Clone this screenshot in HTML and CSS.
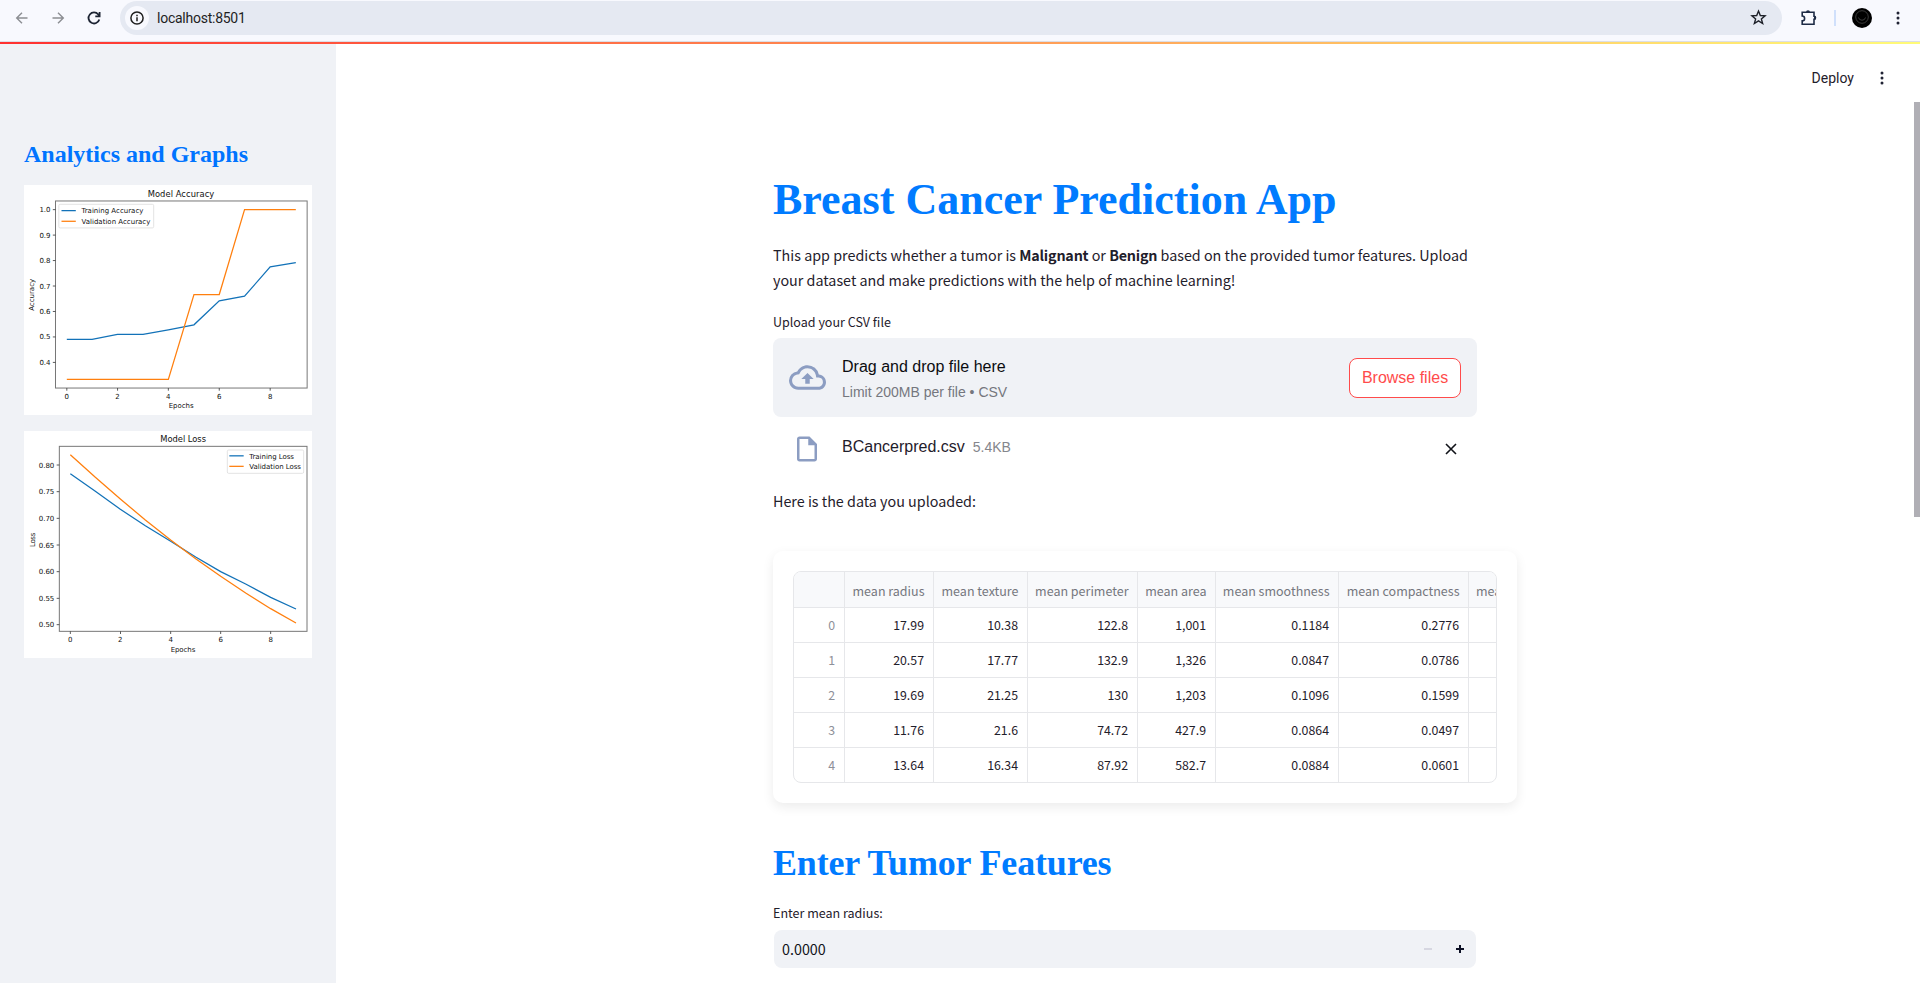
FILE: index.html
```html
<!DOCTYPE html>
<html lang="en">
<head>
<meta charset="utf-8">
<title>Breast Cancer Prediction App</title>
<link rel="stylesheet" href="styles.css">
</head>
<body>
<div class="toolbar">
  <svg class="nav-icon back" viewBox="0 0 16 16"><path d="M13.5 8H3M8 2.7L2.7 8L8 13.3"/></svg>
  <svg class="nav-icon forward" viewBox="0 0 16 16"><path d="M2.500 8H13M8 2.700L13.300 8L8 13.300"/></svg>
  <svg class="nav-icon reload" viewBox="0 0 16 16"><path d="M13.300 9.500A5.500 5.500 0 1 1 12.300 4.500L13.500 6M13.600 2V6.300H9.300"/></svg>
  <div class="omnibox">
    <span class="site-info"><svg viewBox="0 0 16 16"><circle cx="8" cy="8" r="6.100"/><path d="M8 7.300V11.300M8 4.700V6.200"/></svg></span>
    <span class="url">localhost:8501</span>
    <svg class="star" viewBox="0 0 16 16"><path d="M8 1.900L9.700 6.100L14.200 6.400L10.700 9.300L11.900 13.700L8 11.200L4.100 13.700L5.300 9.300L1.800 6.400L6.300 6.100Z"/></svg>
  </div>
  <svg class="puzzle" viewBox="0 0 18 18"><path d="M2.200 3.200H14V7.300A1.500 1.500 0 0 1 14 10.300V15.300H2.200V11.800A2.400 2.400 0 0 0 2.200 7Z"/><path class="solid" d="M6 3.200a2 2 0 0 1 4 0zM14 7a2 2 0 0 1 0 4z"/></svg>
  <span class="separator"></span>
  <svg class="avatar" viewBox="0 0 20 20"><circle cx="10" cy="10" r="10"/><circle class="ring" cx="10" cy="9" r="6.300"/><path class="ring" d="M6.500 9.500A3.600 3.600 0 0 0 13.500 9.500"/></svg>
  <svg class="dots" viewBox="0 0 4 14"><circle cx="2" cy="2" r="1.500"/><circle cx="2" cy="7" r="1.500"/><circle cx="2" cy="12" r="1.500"/></svg>
</div>
<div class="decoration"></div>
<div class="app">
  <aside class="sidebar">
    <h3>Analytics and Graphs</h3>
    <svg class="chart accuracy" viewBox="72 44 864 691">
      <rect class="frame" x="166" y="92" width="756" height="562"/>
      <path class="tick" d="M158 118H166M158 194.500H166M158 271H166M158 347.500H166M158 424H166M158 500.500H166M158 577H166M200 654V662M352.500 654V662M505 654V662M658 654V662M811 654V662"/>
      <polyline class="train" points="200,508 276,508 352,493 429,493 505,479 582,464 658,392 734,378 811,290 888,277"/>
      <polyline class="valid" points="200,628 505,628 582,373 658,373 734,118 888,118"/>
      <rect class="legend" x="176" y="102" width="285" height="71" rx="4"/>
      <path class="train" d="M184 121H227"/><path class="valid" d="M184 153H227"/>
      <text x="443" y="79" font-size="25" textLength="200">Model Accuracy</text>
      <text x="244" y="129" textLength="186">Training Accuracy</text>
      <text x="244" y="161" textLength="207">Validation Accuracy</text>
      <g class="y-labels"><text x="151" y="126">1.0</text><text x="151" y="202">0.9</text><text x="151" y="279">0.8</text><text x="151" y="355">0.7</text><text x="151" y="432">0.6</text><text x="151" y="508">0.5</text><text x="151" y="585">0.4</text></g>
      <g class="x-labels"><text x="200" y="686">0</text><text x="352" y="686">2</text><text x="505" y="686">4</text><text x="658" y="686">6</text><text x="811" y="686">8</text></g>
      <text x="506" y="715" textLength="75">Epochs</text>
      <text transform="translate(102 422) rotate(-90)" textLength="96">Accuracy</text>
    </svg>
    <svg class="chart loss" viewBox="72 33 864 681">
      <rect class="frame" x="178" y="79" width="743" height="555"/>
      <path class="tick" d="M170 135H178M170 215H178M170 295H178M170 375H178M170 455H178M170 535H178M170 614H178M211 634V642M361.500 634V642M512 634V642M662 634V642M812 634V642"/>
      <polyline class="train" points="211,161 286,214 361,268 436,317 512,364 587,411 662,455 737,492 812,532 888,567"/>
      <polyline class="valid" points="211,104 286,172 361,237 436,300 512,360 587,416 662,469 737,519 812,566 888,609"/>
      <rect class="legend" x="682" y="90" width="229" height="70" rx="4"/>
      <path class="train" d="M688 107.500H731"/><path class="valid" d="M688 139H731"/>
      <text x="481" y="67" font-size="25" textLength="137">Model Loss</text>
      <text x="748" y="116" textLength="134">Training Loss</text>
      <text x="748" y="147" textLength="155">Validation Loss</text>
      <g class="y-labels"><text x="163" y="143">0.80</text><text x="163" y="223">0.75</text><text x="163" y="303">0.70</text><text x="163" y="383">0.65</text><text x="163" y="463">0.60</text><text x="163" y="543">0.55</text><text x="163" y="622">0.50</text></g>
      <g class="x-labels"><text x="211" y="665">0</text><text x="361" y="665">2</text><text x="512" y="665">4</text><text x="662" y="665">6</text><text x="812" y="665">8</text></g>
      <text x="512" y="695" textLength="74">Epochs</text>
      <text transform="translate(105 381) rotate(-90)" textLength="43">Loss</text>
    </svg>
  </aside>
  <main class="main">
    <header class="header">
      <span class="deploy">Deploy</span>
      <svg class="dots" viewBox="0 0 4 14"><circle cx="2" cy="2" r="1.500"/><circle cx="2" cy="7" r="1.500"/><circle cx="2" cy="12" r="1.500"/></svg>
    </header>
    <div class="content">
      <h1>Breast Cancer Prediction App</h1>
      <p class="intro">This app predicts whether a tumor is <strong>Malignant</strong> or <strong>Benign</strong> based on the provided tumor features. Upload<br>your dataset and make predictions with the help of machine learning!</p>
      <div class="label upload-label">Upload your CSV file</div>
      <div class="dropzone">
        <svg class="cloud" viewBox="0 0 24 24"><path d="M19.350 10.040A7.490 7.490 0 0 0 12 4C9.110 4 6.600 5.640 5.350 8.040A5.994 5.994 0 0 0 0 14c0 3.310 2.690 6 6 6h13c2.760 0 5-2.240 5-5 0-2.640-2.050-4.780-4.650-4.960zM19 18H6c-2.210 0-4-1.790-4-4 0-2.050 1.530-3.760 3.560-3.970l1.070-.110.500-.950A5.469 5.469 0 0 1 12 6c2.620 0 4.880 1.860 5.390 4.430l.300 1.500 1.530.110A2.980 2.980 0 0 1 22 15c0 1.650-1.350 3-3 3zM8 13h2.550v3h2.900v-3H16l-4-4z"/></svg>
        <div class="drop-text"><span>Drag and drop file here</span><small>Limit 200MB per file • CSV</small></div>
        <button class="browse">Browse files</button>
      </div>
      <div class="file">
        <svg class="file-icon" viewBox="0 0 24 24"><path d="M14 2H6c-1.100 0-2 .900-2 2v16c0 1.100.900 2 2 2h12c1.100 0 2-.900 2-2V8l-6-6zM6 20V4h7v5h5v11H6z"/></svg>
        <span class="file-name">BCancerpred.csv</span>
        <span class="file-size">5.4KB</span>
        <svg class="close" viewBox="0 0 12 12"><path d="M1 1L11 11M11 1L1 11"/></svg>
      </div>
      <p class="data-note">Here is the data you uploaded:</p>
      <div class="card">
        <div class="table">
          <div class="row head"><span></span><span>mean radius</span><span>mean texture</span><span>mean perimeter</span><span>mean area</span><span>mean smoothness</span><span>mean compactness</span><span>mean concavity</span></div>
          <div class="row"><span>0</span><span>17.99</span><span>10.38</span><span>122.8</span><span>1,001</span><span>0.1184</span><span>0.2776</span><span></span></div>
          <div class="row"><span>1</span><span>20.57</span><span>17.77</span><span>132.9</span><span>1,326</span><span>0.0847</span><span>0.0786</span><span></span></div>
          <div class="row"><span>2</span><span>19.69</span><span>21.25</span><span>130</span><span>1,203</span><span>0.1096</span><span>0.1599</span><span></span></div>
          <div class="row"><span>3</span><span>11.76</span><span>21.6</span><span>74.72</span><span>427.9</span><span>0.0864</span><span>0.0497</span><span></span></div>
          <div class="row"><span>4</span><span>13.64</span><span>16.34</span><span>87.92</span><span>582.7</span><span>0.0884</span><span>0.0601</span><span></span></div>
        </div>
      </div>
      <h2>Enter Tumor Features</h2>
      <div class="label radius-label">Enter mean radius:</div>
      <div class="number-input">
        <span class="value">0.0000</span>
        <svg class="step minus" viewBox="0 0 8 8"><path d="M0 4H8"/></svg>
        <svg class="step" viewBox="0 0 8 8"><path d="M0 4H8M4 0V8"/></svg>
      </div>
    </div>
    <div class="scrollbar"></div>
  </main>
</div>
</body>
</html>
```
FILE: styles.css
```css
* { box-sizing: border-box; }
body {
  margin: 0;
  height: 983px;
  overflow: hidden;
  display: flex;
  flex-direction: column;
  background: #fff;
  color: #1f202b;
  font-family: "Noto Sans CJK SC", "Noto Sans", sans-serif;
  font-size: 14.33px;
}
svg { display: block; flex: none; }
h1, h2, h3, p { margin: 0; }

.toolbar {
  display: flex;
  align-items: center;
  height: 42px;
  padding: 0 20px 6px 14px;
  background: #f8f9fe;
  border-bottom: 1px solid #dcdee6;
}
.nav-icon { width: 16px; height: 16px; fill: none; stroke: #8c8e93; stroke-width: 1.4; }
.back { margin-right: 20px; }
.forward { margin-right: 20px; }
.reload { stroke: #1d2433; stroke-width: 1.8; margin-right: 18px; }
.omnibox {
  display: flex;
  align-items: center;
  width: 1662px;
  height: 34px;
  padding: 0 15px 0 5px;
  border-radius: 17px;
  background: #e5e9f2;
}
.site-info {
  display: flex;
  align-items: center;
  justify-content: center;
  width: 24px;
  height: 24px;
  border-radius: 50%;
  background: #f8f9fe;
}
.site-info svg { width: 16px; height: 16px; fill: none; stroke: #1f1f1f; stroke-width: 1.5; }
.url { flex: 1; margin-left: 8px; font: 14px/20px Roboto, sans-serif; letter-spacing: -.25px; color: #1f1f1f; }
.star { width: 17px; height: 17px; fill: none; stroke: #1d2028; stroke-width: 1.3; }
.puzzle { width: 18px; height: 18px; margin-left: 18px; fill: none; stroke: #1d2b45; stroke-width: 1.6; }
.puzzle .solid { fill: #1d2b45; stroke: none; }
.separator { width: 2px; height: 16px; margin: 0 16px 0 16px; background: #d0e0fb; }
.avatar { width: 20px; height: 20px; }
.ring { fill: none; stroke: #555; stroke-width: .7; }
.dots { width: 4px; height: 14px; fill: #202334; }
.toolbar .dots { margin-left: auto; }
.decoration { height: 2px; background: linear-gradient(90deg, #ff3030, #fffb78); }

.app { flex: 1; display: flex; min-height: 0; }
.sidebar { width: 336px; padding: 93px 24px 0; background: #f0f2f6; }
.sidebar h3 {
  font: bold 24px/35px "Liberation Serif", serif;
  color: #0074ff;
}
.chart { width: 288px; font-family: "DejaVu Sans", sans-serif; font-size: 21px; fill: #111; background: #fff; }
.accuracy { height: 230px; margin-top: 13px; }
.loss { height: 227px; margin-top: 16px; }
.frame { fill: none; stroke: #777; stroke-width: 3; }
.tick { stroke: #333; stroke-width: 2.4; }
.train, .valid { fill: none; stroke-width: 3.8; }
.train { stroke: #1272b8; }
.valid { stroke: #ff7f0e; }
.legend { fill: #fff; stroke: #ddd; stroke-width: 2.5; }
.y-labels { text-anchor: end; }
.x-labels { text-anchor: middle; }

.main { position: relative; flex: 1; }
.header {
  display: flex;
  align-items: center;
  justify-content: flex-end;
  height: 68px;
  padding-right: 36px;
}
.deploy { margin-right: 26px; font: 14px/20px Roboto, sans-serif; }
.content { width: 704px; margin-left: 437px; padding-top: 61px; }
h1 { font: bold 44px/53px "Liberation Serif", serif; color: #007bff; }
.intro { margin-top: 16px; line-height: 25px; white-space: nowrap; }
.intro strong { font-weight: 600; letter-spacing: -.2px; }
.label { font-size: 12.54px; line-height: 21px; }
.upload-label { margin-top: 19px; }
.dropzone {
  display: flex;
  align-items: center;
  height: 79px;
  margin-top: 6px;
  padding: 0 16px;
  border-radius: 8px;
  background: #f0f2f6;
}
.cloud { width: 37px; height: 37px; fill: #8c9dc2; }
.drop-text {
  display: flex;
  flex-direction: column;
  flex: 1;
  margin-left: 16px;
  padding-top: 3px;
  font: 16px/24px "Liberation Sans", sans-serif;
  color: #0b0c10;
}
.drop-text small { margin-top: 1px; font-size: 14px; color: #75777e; }
.browse {
  width: 112px;
  height: 40px;
  padding: 0;
  border: 1px solid #ff4b4b;
  border-radius: 8px;
  background: #fff;
  font: 16px "Liberation Sans", sans-serif;
  color: #ff4b4b;
}
.file {
  display: flex;
  align-items: center;
  height: 30px;
  margin-top: 17px;
  padding: 0 20px 0 19px;
  font: 16px/25px "Liberation Sans", sans-serif;
}
.file-icon { width: 30px; height: 30px; fill: #8c9dc2; }
.file-name { align-self: flex-start; margin-left: 20px; }
.file-size { align-self: flex-start; margin-left: 8px; font-size: 14px; line-height: 26px; color: #85868c; }
.close { width: 12px; height: 12px; margin-left: auto; stroke: #111319; stroke-width: 1.6; }
.data-note { margin-top: 24px; line-height: 25px; }
.card {
  width: 744px;
  height: 252px;
  margin-top: 38px;
  padding: 20px;
  border-radius: 10px;
  box-shadow: 0 4px 12px rgba(0, 0, 0, .08);
}
.table {
  height: 212px;
  border: 1px solid #e6e7ea;
  border-radius: 8px;
  overflow: hidden;
  font-size: 12.35px;
}
.row {
  display: grid;
  grid-template-columns: 51px 89px 94px 110px 78px 123px 130px 110px;
  height: 35px;
  line-height: 34px;
  text-align: right;
}
.row span {
  padding-right: 9px;
  border-right: 1px solid #e6e7ea;
  border-bottom: 1px solid #e6e7ea;
  white-space: nowrap;
}
.row span:first-child { color: #8e9099; }
.row.head { height: 36px; line-height: 37px; font-size: 12.5px; background: #f8f9fb; color: #75777e; }
.row.head span { height: 36px; padding-right: 8.5px; }
.row.head span:last-child { padding-left: 7px; text-align: left; }
h2 { margin-top: 39px; font: bold 36px/43px "Liberation Serif", serif; letter-spacing: -.18px; color: #007bff; }
.radius-label { margin-top: 17px; }
.number-input {
  display: flex;
  align-items: center;
  width: 702px;
  height: 38px;
  margin: 7px 0 0 1px;
  padding: 0 12px 0 8px;
  border-radius: 8px;
  background: #f0f2f6;
  color: #111319;
}
.value { flex: 1; padding-bottom: 2px; }
.step { width: 8px; height: 8px; stroke: #0c1024; stroke-width: 2; }
.minus { margin-right: 24px; stroke: #d6d7e1; }
.scrollbar { position: absolute; top: 58px; right: 0; width: 6px; height: 415px; background: #b0afb5; }
```
